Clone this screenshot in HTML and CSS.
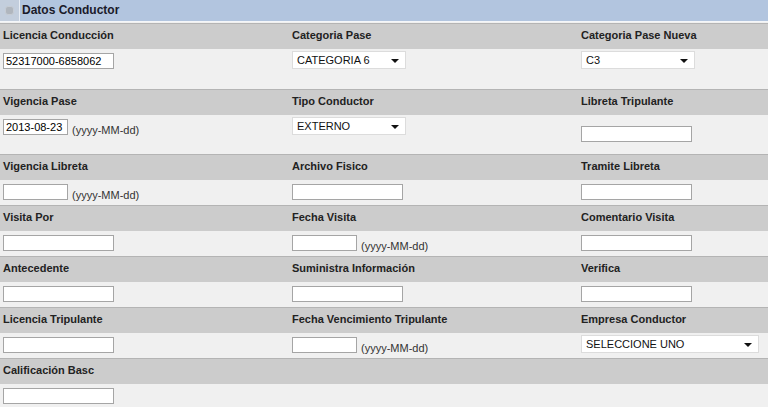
FILE: index.html
```html
<!DOCTYPE html>
<html lang="es">
<head>
  <meta charset="UTF-8">
  <title>Datos Conductor</title>
  <link rel="stylesheet" href="styles.css">
</head>
<body>
  <div class="titulo">
    <div class="titulo-icono"><span class="bola"></span></div>
    <div class="titulo-texto">Datos Conductor</div>
  </div>

  <div class="etiquetas">
    <div>Licencia Conducción</div>
    <div>Categoria Pase</div>
    <div>Categoria Pase Nueva</div>
  </div>
  <div class="valores alto primero">
    <div><input type="text" class="caja" value="52317000-6858062"></div>
    <div><div class="lista">CATEGORIA 6<span class="flecha"></span></div></div>
    <div><div class="lista">C3<span class="flecha"></span></div></div>
  </div>

  <div class="etiquetas">
    <div>Vigencia Pase</div>
    <div>Tipo Conductor</div>
    <div>Libreta Tripulante</div>
  </div>
  <div class="valores alto">
    <div><input type="text" class="caja fecha" value="2013-08-23"><span class="formato">(yyyy-MM-dd)</span></div>
    <div><div class="lista">EXTERNO<span class="flecha"></span></div></div>
    <div class="abajo"><input type="text" class="caja"></div>
  </div>

  <div class="etiquetas">
    <div>Vigencia Libreta</div>
    <div>Archivo Fisico</div>
    <div>Tramite Libreta</div>
  </div>
  <div class="valores">
    <div><input type="text" class="caja fecha"><span class="formato">(yyyy-MM-dd)</span></div>
    <div><input type="text" class="caja"></div>
    <div><input type="text" class="caja"></div>
  </div>

  <div class="etiquetas">
    <div>Visita Por</div>
    <div>Fecha Visita</div>
    <div>Comentario Visita</div>
  </div>
  <div class="valores">
    <div><input type="text" class="caja"></div>
    <div><input type="text" class="caja fecha"><span class="formato">(yyyy-MM-dd)</span></div>
    <div><input type="text" class="caja"></div>
  </div>

  <div class="etiquetas">
    <div>Antecedente</div>
    <div>Suministra Información</div>
    <div>Verifica</div>
  </div>
  <div class="valores">
    <div><input type="text" class="caja"></div>
    <div><input type="text" class="caja"></div>
    <div><input type="text" class="caja"></div>
  </div>

  <div class="etiquetas">
    <div>Licencia Tripulante</div>
    <div>Fecha Vencimiento Tripulante</div>
    <div>Empresa Conductor</div>
  </div>
  <div class="valores">
    <div><input type="text" class="caja"></div>
    <div><input type="text" class="caja fecha"><span class="formato">(yyyy-MM-dd)</span></div>
    <div><div class="lista ancha">SELECCIONE UNO<span class="flecha"></span></div></div>
  </div>

  <div class="etiquetas">
    <div>Calificación Basc</div>
    <div></div>
    <div></div>
  </div>
  <div class="valores">
    <div><input type="text" class="caja"></div>
    <div></div>
    <div></div>
  </div>
</body>
</html>
```

FILE: styles.css
```css
body {
  margin: 0;
  background-color: #f0f0f0;
  font-family: "Liberation Sans", Arial, sans-serif;
  font-size: 11px;
  color: #000;
}
.titulo {
  display: flex;
  height: 21px;
  border-bottom: 1px solid #f4f6f9;
  background-color: #b2c5df;
}
.titulo-icono {
  width: 19px;
  border-right: 1px solid #e8edf4;
  background-color: #c3cedd;
  display: flex;
  align-items: center;
  justify-content: center;
}
.bola {
  width: 7px;
  height: 7px;
  border-radius: 3px;
  background-color: #b0b6be;
  border: 1px solid #c6ccd4;
}
.titulo-texto {
  padding-left: 2px;
  font-weight: bold;
  font-size: 12px;
  line-height: 21px;
  color: #1a1a2a;
}
.etiquetas {
  display: grid;
  grid-template-columns: 289px 289px 1fr;
  height: 25px;
  margin-top: 1px;
  border-top: 1px solid #b4b4b4;
  background-color: #cccccc;
  font-weight: bold;
  font-size: 11px;
  color: #222;
}
.valores + .etiquetas {
  margin-top: 0;
}
.etiquetas div {
  padding-left: 3px;
  line-height: 23px;
}
.valores {
  display: grid;
  grid-template-columns: 289px 289px 1fr;
  height: 25px;
  background-color: #f0f0f0;
}
.valores.alto {
  height: 39px;
}
.valores.primero {
  height: 40px;
}
.valores > div {
  padding: 4px 0 0 3px;
  display: flex;
  align-items: flex-start;
}
.valores > div.abajo {
  padding-top: 11px;
}
.caja {
  box-sizing: border-box;
  width: 111px;
  height: 16px;
  margin: 0;
  padding: 0 2px;
  border: 1px solid #a5a5a5;
  background-color: #fff;
  font-family: "Liberation Sans", Arial, sans-serif;
  font-size: 11px;
  color: #000;
}
.caja.fecha {
  width: 65px;
}
.formato {
  margin-left: 4px;
  margin-top: 5px;
  font-size: 11px;
  color: #333;
}
.lista {
  box-sizing: border-box;
  position: relative;
  width: 114px;
  height: 18px;
  margin-top: -2px;
  padding-left: 4px;
  border: 1px solid #dcdcdc;
  background-color: #fff;
  line-height: 16px;
  font-size: 11px;
  color: #111;
}
.lista.ancha {
  width: 178px;
}
.flecha {
  position: absolute;
  right: 6px;
  top: 7px;
  border-left: 4px solid transparent;
  border-right: 4px solid transparent;
  border-top: 4px solid #111;
}
```
